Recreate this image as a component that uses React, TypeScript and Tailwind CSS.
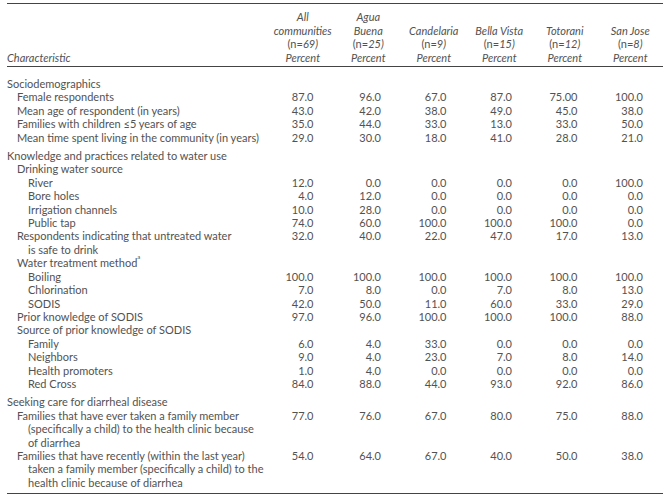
import React from 'react';

type Row = {
  lines: string[];
  level: 0 | 1 | 2;
  vals?: string[];
  section?: boolean;
  sup?: string;
};

const rows: Row[] = [
  { lines: ['Sociodemographics'], level: 0, section: true },
  { lines: ['Female respondents'], level: 1, vals: ['87.0', '96.0', '67.0', '87.0', '75.00', '100.0'] },
  { lines: ['Mean age of respondent (in years)'], level: 1, vals: ['43.0', '42.0', '38.0', '49.0', '45.0', '38.0'] },
  { lines: ['Families with children \u22645 years of age'], level: 1, vals: ['35.0', '44.0', '33.0', '13.0', '33.0', '50.0'] },
  { lines: ['Mean time spent living in the community (in years)'], level: 1, vals: ['29.0', '30.0', '18.0', '41.0', '28.0', '21.0'] },
  { lines: ['Knowledge and practices related to water use'], level: 0, section: true },
  { lines: ['Drinking water source'], level: 1 },
  { lines: ['River'], level: 2, vals: ['12.0', '0.0', '0.0', '0.0', '0.0', '100.0'] },
  { lines: ['Bore holes'], level: 2, vals: ['4.0', '12.0', '0.0', '0.0', '0.0', '0.0'] },
  { lines: ['Irrigation channels'], level: 2, vals: ['10.0', '28.0', '0.0', '0.0', '0.0', '0.0'] },
  { lines: ['Public tap'], level: 2, vals: ['74.0', '60.0', '100.0', '100.0', '100.0', '0.0'] },
  { lines: ['Respondents indicating that untreated water', 'is safe to drink'], level: 1, vals: ['32.0', '40.0', '22.0', '47.0', '17.0', '13.0'] },
  { lines: ['Water treatment method'], level: 1, sup: 'a' },
  { lines: ['Boiling'], level: 2, vals: ['100.0', '100.0', '100.0', '100.0', '100.0', '100.0'] },
  { lines: ['Chlorination'], level: 2, vals: ['7.0', '8.0', '0.0', '7.0', '8.0', '13.0'] },
  { lines: ['SODIS'], level: 2, vals: ['42.0', '50.0', '11.0', '60.0', '33.0', '29.0'] },
  { lines: ['Prior knowledge of SODIS'], level: 1, vals: ['97.0', '96.0', '100.0', '100.0', '100.0', '88.0'] },
  { lines: ['Source of prior knowledge of SODIS'], level: 1 },
  { lines: ['Family'], level: 2, vals: ['6.0', '4.0', '33.0', '0.0', '0.0', '0.0'] },
  { lines: ['Neighbors'], level: 2, vals: ['9.0', '4.0', '23.0', '7.0', '8.0', '14.0'] },
  { lines: ['Health promoters'], level: 2, vals: ['1.0', '4.0', '0.0', '0.0', '0.0', '0.0'] },
  { lines: ['Red Cross'], level: 2, vals: ['84.0', '88.0', '44.0', '93.0', '92.0', '86.0'] },
  { lines: ['Seeking care for diarrheal disease'], level: 0, section: true },
  {
    lines: [
      'Families that have ever taken a family member',
      '(specifically a child) to the health clinic because',
      'of diarrhea',
    ],
    level: 1,
    vals: ['77.0', '76.0', '67.0', '80.0', '75.0', '88.0'],
  },
  {
    lines: [
      'Families that have recently (within the last year)',
      'taken a family member (specifically a child) to the',
      'health clinic because of diarrhea',
    ],
    level: 1,
    vals: ['54.0', '64.0', '67.0', '40.0', '50.0', '38.0'],
  },
];

const heads: [string, string, string][] = [
  ['All', 'communities', '69)'],
  ['Agua', 'Buena', '25)'],
  ['', 'Candelaria', '9)'],
  ['', 'Bella Vista', '15)'],
  ['', 'Totorani', '12)'],
  ['', 'San Jose', '8)'],
];

const grid = 'grid grid-cols-[263px_repeat(6,65.5px)]';
const indent = ['pl-0', 'pl-[10px]', 'pl-[21px]'];

export default function App() {
  return (
    <div
      className="w-[671px] h-[496px] bg-white text-[#525252] text-[11px] leading-[13.4px] pl-[7px] pt-[3px]"
      style={{ fontFamily: 'Lato, "Open Sans", sans-serif' }}
    >
      <div className="w-[656px]">
        {/* header */}
        <div className={`${grid} border-t border-b border-[#444] pt-[6px] pb-[2px] leading-[13.5px]`}>
          <div className="flex items-end italic">Characteristic</div>
          {heads.map((h, i) => (
            <div key={i} className="flex flex-col items-center text-center">
              <div className="italic h-[13.5px]">{h[0]}</div>
              <div className="italic">{h[1]}</div>
              <div>
                (n=<span className="italic">{h[2]}</span>
              </div>
              <div className="italic">Percent</div>
            </div>
          ))}
        </div>

        {/* body */}
        <div className="pt-[10px] pb-[4px] border-b border-[#444]">
          {rows.map((r, i) => (
            <div key={i} className={`${grid} ${r.section && i > 0 ? 'mt-[5px]' : ''}`}>
              <div className={indent[r.level]}>
                {r.lines.map((l, j) => (
                  <div key={j} className={j > 0 ? 'pl-[11px]' : ''}>
                    {l}
                    {r.sup && j === 0 && <sup className="text-[6px] align-top relative top-[1px]">{r.sup}</sup>}
                  </div>
                ))}
              </div>
              {(r.vals ?? ['', '', '', '', '', '']).map((v, k) => (
                <div key={k} className={`text-right ${k === 0 ? 'pr-[22px]' : 'pr-[20px]'}`}>
                  {v}
                </div>
              ))}
            </div>
          ))}
        </div>
      </div>
    </div>
  );
}
